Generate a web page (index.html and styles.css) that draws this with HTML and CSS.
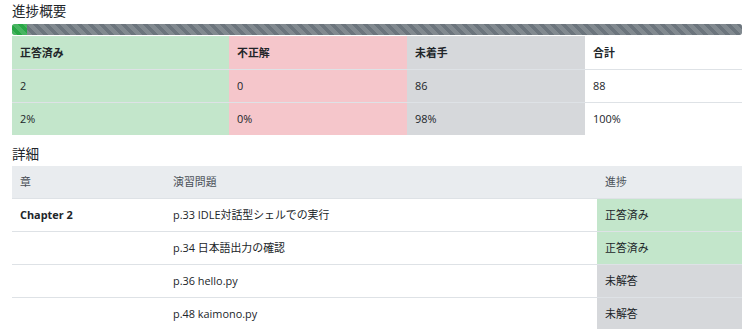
FILE: index.html
```html
<!DOCTYPE html>
<html lang="ja">
<head>
<meta charset="utf-8">
<link rel="stylesheet" href="styles.css">
</head>
<body>
<div class="page">
  <h5 class="title">進捗概要</h5>
  <div class="progress">
    <div class="bar bar-success" style="width:2%"></div>
    <div class="bar bar-secondary" style="width:98%"></div>
  </div>
  <table class="tbl summary">
    <colgroup>
      <col class="c-ok"><col class="c-ng"><col class="c-un"><col class="c-sum">
    </colgroup>
    <tr class="head">
      <td class="ok">正答済み</td><td class="ng">不正解</td><td class="un">未着手</td><td>合計</td>
    </tr>
    <tr>
      <td class="ok">2</td><td class="ng">0</td><td class="un">86</td><td>88</td>
    </tr>
    <tr>
      <td class="ok">2%</td><td class="ng">0%</td><td class="un">98%</td><td>100%</td>
    </tr>
  </table>
  <h5 class="title title-detail">詳細</h5>
  <table class="tbl detail">
    <colgroup>
      <col class="c-ch"><col class="c-ex"><col class="c-pr">
    </colgroup>
    <thead>
      <tr><th>章</th><th>演習問題</th><th>進捗</th></tr>
    </thead>
    <tbody>
      <tr><td class="bold">Chapter 2</td><td>p.33 IDLE対話型シェルでの実行</td><td class="ok">正答済み</td></tr>
      <tr><td></td><td>p.34 日本語出力の確認</td><td class="ok">正答済み</td></tr>
      <tr><td></td><td>p.36 hello.py</td><td class="un">未解答</td></tr>
      <tr><td></td><td>p.48 kaimono.py</td><td class="un">未解答</td></tr>
    </tbody>
  </table>
</div>
</body>
</html>
```

FILE: styles.css
```css
html, body {
  margin: 0;
  padding: 0;
  background: #fff;
}
body {
  font-family: "Open Sans", "Noto Sans CJK JP", sans-serif;
  font-size: 10.9px;
  line-height: 16px;
  color: #212529;
}
.page {
  padding: 2px 8px 0 12px;
}
.title {
  margin: 0 0 6px 0;
  font-family: "Noto Sans CJK JP", sans-serif;
  font-weight: 400;
  font-size: 13.6px;
  line-height: 16px;
  color: #212529;
}
.title-detail {
  margin-top: 0;
  margin-bottom: 5px;
}
.progress {
  display: flex;
  height: 11px;
  background: #e9ecef;
  border-radius: 2.7px;
  overflow: hidden;
  margin-bottom: 1px;
}
.bar {
  height: 100%;
  background-image: linear-gradient(45deg, rgba(255,255,255,.15) 25%, transparent 25%, transparent 50%, rgba(255,255,255,.15) 50%, rgba(255,255,255,.15) 75%, transparent 75%, transparent);
  background-size: 11px 11px;
}
.bar-success { background-color: #28a745; }
.bar-secondary { background-color: #6c757d; }

.tbl {
  width: 100%;
  border-collapse: collapse;
  table-layout: fixed;
  margin-bottom: 11px;
}
.tbl td, .tbl th {
  padding: 8px 8px;
  text-align: left;
  vertical-align: top;
  border-top: 1px solid #dee2e6;
  height: 16px;
  white-space: nowrap;
}
.summary tr:first-child td { border-top: none; }
.summary .head td { font-weight: 700; padding-top: 9px; padding-bottom: 8px; }
.summary { margin-bottom: 10px; }
.c-ok { width: 217px; }
.c-ng { width: 178px; }
.c-un { width: 178px; }
.c-sum { width: auto; }

.ok { background: #c3e6cb; }
.ng { background: #f5c6cb; }
.un { background: #d6d8db; }
.bold { font-weight: 700; }

.detail thead th {
  background: #e9ecef;
  font-weight: 400;
  border-top: none;
  border-bottom: 1px solid #dee2e6;
  color: #495057;
}
.c-ch { width: 153px; }
.c-ex { width: 432px; }
.c-pr { width: auto; }
```
